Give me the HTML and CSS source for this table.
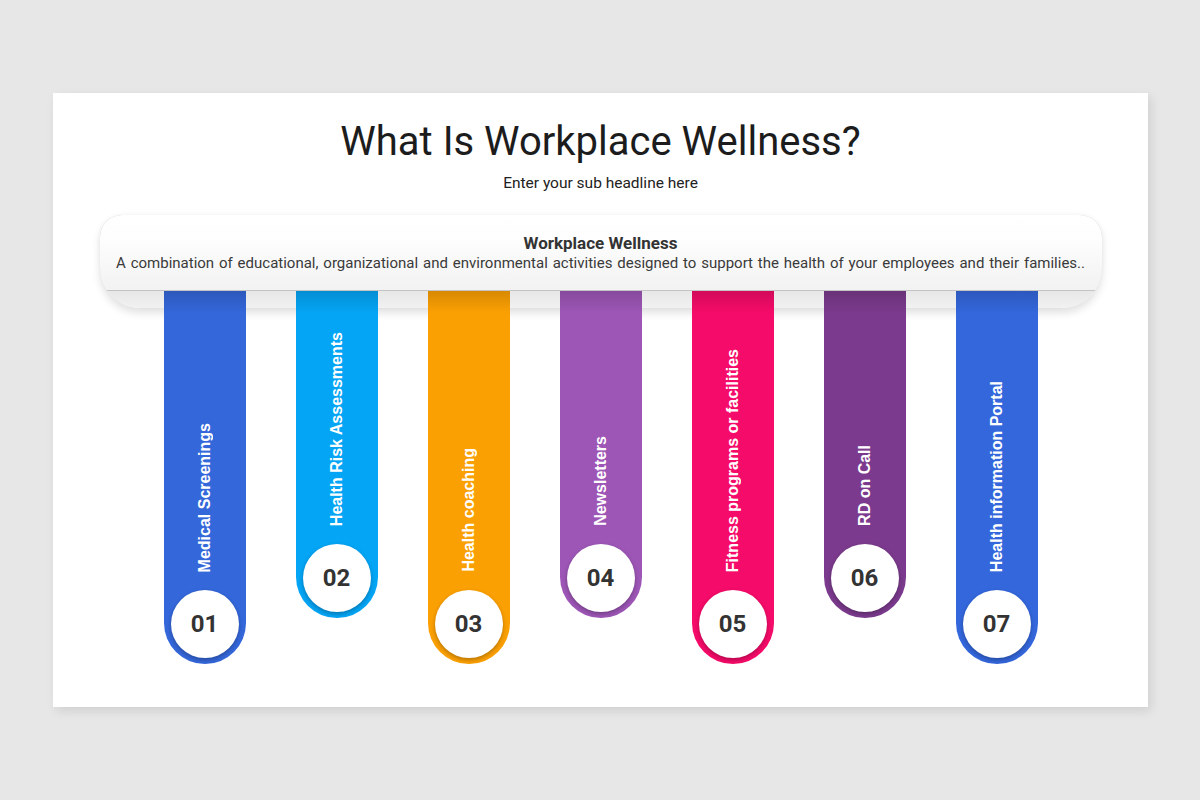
FILE: index.html
```html
<!DOCTYPE html>
<html lang="en">
<head>
<meta charset="utf-8">
<title>What Is Workplace Wellness?</title>
<link rel="stylesheet" href="styles.css">
</head>
<body>
<div class="slide">
  <h1 class="title">What Is Workplace Wellness?</h1>
  <p class="subtitle">Enter your sub headline here</p>
  <div class="banner">
    <div class="banner-face">
      <div class="banner-title">Workplace Wellness</div>
      <div class="banner-text">A combination of educational, organizational and environmental activities designed to support the health of your employees and their families..</div>
    </div>
  </div>
  <div class="bars">
    <div class="bar long c1"><span class="label">Medical Screenings</span><span class="num">01</span></div>
    <div class="bar short c2"><span class="label">Health Risk Assessments</span><span class="num">02</span></div>
    <div class="bar long c3"><span class="label">Health coaching</span><span class="num">03</span></div>
    <div class="bar short c4"><span class="label">Newsletters</span><span class="num">04</span></div>
    <div class="bar long c5"><span class="label">Fitness programs or facilities</span><span class="num">05</span></div>
    <div class="bar short c6"><span class="label">RD on Call</span><span class="num">06</span></div>
    <div class="bar long c7"><span class="label">Health information Portal</span><span class="num">07</span></div>
  </div>
</div>
</body>
</html>
```

FILE: styles.css
```css
html, body {
  margin: 0;
  padding: 0;
}
body {
  background: #e8e7e8;
  padding: 93px 0 0 53px;
  height: 800px;
  box-sizing: border-box;
  font-family: Roboto, "Liberation Sans", sans-serif;
}
.slide {
  width: 1095px;
  height: 614px;
  background: #ffffff;
  box-sizing: border-box;
  padding-top: 24px;
  box-shadow: 3px 4px 10px rgba(0, 0, 0, 0.10);
}
.title {
  margin: 0;
  font-weight: 400;
  font-size: 40px;
  line-height: 50px;
  color: #1c1c1c;
  text-align: center;
}
.subtitle {
  margin: 6px 0 0;
  font-size: 15.5px;
  line-height: 20px;
  color: #222;
  text-align: center;
}
.banner {
  position: relative;
  margin: 22px 46px 0 47px;
  height: 93px;
  border-radius: 22px 22px 40px 40px;
  background: linear-gradient(#d9d9d9, #cbcbcb 30%, #e4e4e4 75%, #f1f1f1);
  box-shadow: 0 -1px 4px rgba(0, 0, 0, 0.03), 0 5px 8px rgba(0, 0, 0, 0.12);
  overflow: hidden;
}
.banner-face {
  height: 76px;
  box-sizing: border-box;
  padding: 18px 17px 0 16px;
  background: linear-gradient(#ffffff, #fdfdfd 35%, #f2f2f2);
  border-radius: 22px 22px 0 0;
  border-bottom: 1px solid #c4c4c4;
  text-align: center;
  color: #333;
}
.banner-title {
  font-weight: 700;
  font-size: 17px;
  line-height: 20px;
  color: #333;
}
.banner-text {
  font-size: 15px;
  line-height: 20px;
  text-align: justify;
  text-align-last: justify;
  color: #3a3a3a;
}
.bars {
  position: relative;
  z-index: 2;
  margin-top: -17px;
  display: flex;
  justify-content: center;
  gap: 50px;
  align-items: flex-start;
}
.bar {
  width: 82px;
  display: flex;
  flex-direction: column;
  align-items: center;
  justify-content: flex-end;
  box-sizing: border-box;
  padding-bottom: 6px;
  border-radius: 0 0 41px 41px;
  background-image: linear-gradient(rgba(0, 0, 0, 0.14), rgba(0, 0, 0, 0) 22px);
}
.long { height: 373px; }
.short { height: 327px; }
.c1 { background-color: #3467da; }
.c2 { background-color: #04a5f5; }
.c3 { background-color: #fba003; }
.c4 { background-color: #9d56b6; }
.c5 { background-color: #f50b69; }
.c6 { background-color: #7b3a8d; }
.c7 { background-color: #3467dc; }
.label {
  writing-mode: vertical-rl;
  transform: rotate(180deg);
  font-family: "Liberation Sans", Arial, sans-serif;
  font-weight: 700;
  font-size: 16px;
  line-height: 18px;
  color: #ffffff;
  white-space: nowrap;
  margin-bottom: 18px;
}
.num {
  width: 68px;
  height: 68px;
  border-radius: 50%;
  background: #ffffff;
  display: flex;
  align-items: center;
  justify-content: center;
  font-family: Roboto, sans-serif;
  font-weight: 700;
  font-size: 24px;
  color: #333;
  box-shadow: 0 2px 4px rgba(0, 0, 0, 0.28);
}
```
